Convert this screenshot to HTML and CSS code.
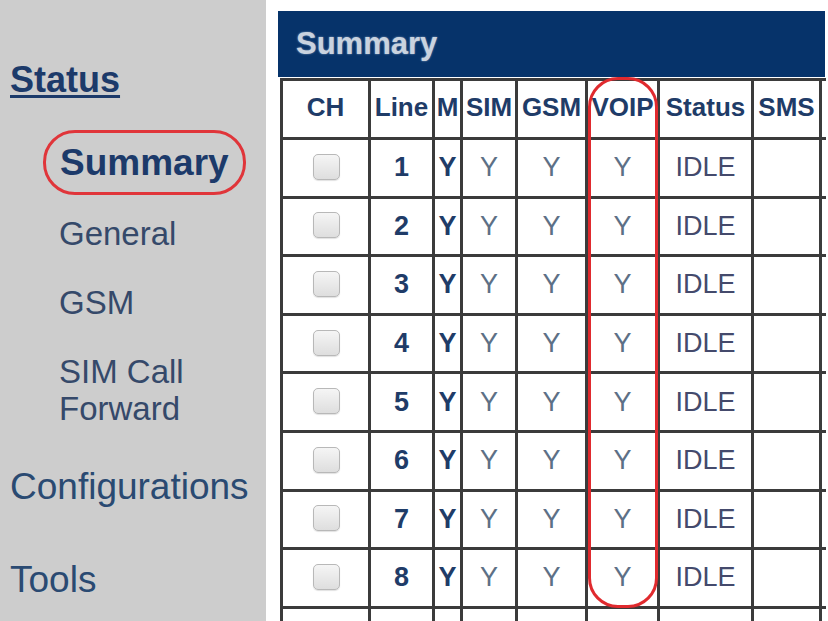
FILE: index.html
```html
<!DOCTYPE html>
<html lang="en">
<head>
<meta charset="utf-8">
<title>Summary</title>
<link rel="stylesheet" href="styles.css">
</head>
<body>
<div class="page">
  <nav class="sidebar">
    <a class="nav-top nav-status">Status</a>
    <a class="nav-sub nav-current">Summary</a>
    <a class="nav-sub nav-general">General</a>
    <a class="nav-sub">GSM</a>
    <a class="nav-sub">SIM Call<br>Forward</a>
    <a class="nav-top nav-config">Configurations</a>
    <a class="nav-top nav-tools">Tools</a>
  </nav>
  <main class="content">
    <div class="panel-title">Summary</div>
    <div class="table-wrap">
      <table class="summary">
        <colgroup>
          <col class="c-ch"><col class="c-line"><col class="c-m"><col class="c-sim"><col class="c-gsm"><col class="c-voip"><col class="c-status"><col class="c-sms"><col class="c-more">
        </colgroup>
        <thead>
          <tr><th>CH</th><th>Line</th><th>M</th><th>SIM</th><th>GSM</th><th>VOIP</th><th>Status</th><th>SMS</th><th></th></tr>
        </thead>
        <tbody>
          <tr><td><input type="checkbox" class="cb"></td><td class="num">1</td><td class="m">Y</td><td class="y">Y</td><td class="y">Y</td><td class="y">Y</td><td class="st">IDLE</td><td></td><td></td></tr>
          <tr><td><input type="checkbox" class="cb"></td><td class="num">2</td><td class="m">Y</td><td class="y">Y</td><td class="y">Y</td><td class="y">Y</td><td class="st">IDLE</td><td></td><td></td></tr>
          <tr><td><input type="checkbox" class="cb"></td><td class="num">3</td><td class="m">Y</td><td class="y">Y</td><td class="y">Y</td><td class="y">Y</td><td class="st">IDLE</td><td></td><td></td></tr>
          <tr><td><input type="checkbox" class="cb"></td><td class="num">4</td><td class="m">Y</td><td class="y">Y</td><td class="y">Y</td><td class="y">Y</td><td class="st">IDLE</td><td></td><td></td></tr>
          <tr><td><input type="checkbox" class="cb"></td><td class="num">5</td><td class="m">Y</td><td class="y">Y</td><td class="y">Y</td><td class="y">Y</td><td class="st">IDLE</td><td></td><td></td></tr>
          <tr><td><input type="checkbox" class="cb"></td><td class="num">6</td><td class="m">Y</td><td class="y">Y</td><td class="y">Y</td><td class="y">Y</td><td class="st">IDLE</td><td></td><td></td></tr>
          <tr><td><input type="checkbox" class="cb"></td><td class="num">7</td><td class="m">Y</td><td class="y">Y</td><td class="y">Y</td><td class="y">Y</td><td class="st">IDLE</td><td></td><td></td></tr>
          <tr><td><input type="checkbox" class="cb"></td><td class="num">8</td><td class="m">Y</td><td class="y">Y</td><td class="y">Y</td><td class="y">Y</td><td class="st">IDLE</td><td></td><td></td></tr>
          <tr><td></td><td></td><td></td><td></td><td></td><td></td><td></td><td></td><td></td></tr>
        </tbody>
      </table>
      <div class="voip-mark"></div>
    </div>
  </main>
</div>
</body>
</html>
```
FILE: styles.css
```css
html, body {
  margin: 0;
  padding: 0;
  background: #ffffff;
  height: 100%;
  overflow: hidden;
}
body {
  font-family: "Liberation Sans", Arial, sans-serif;
}
.page {
  display: flex;
  height: 621px;
  gap: 12px;
}
.sidebar {
  width: 266px;
  flex: none;
  background: #cdcdcd;
  display: flex;
  flex-direction: column;
  align-items: flex-start;
  padding-top: 60px;
  box-sizing: border-box;
}
.sidebar a {
  display: block;
  cursor: pointer;
}
.nav-top {
  font-size: 37px;
  line-height: 40px;
  color: #2a4a72;
  margin-left: 10px;
}
.nav-status {
  font-size: 36px;
  font-weight: bold;
  color: #1c3a6a;
  text-decoration: underline;
  text-decoration-thickness: 3px;
  text-underline-offset: 3px;
}
.nav-sub {
  font-size: 33px;
  line-height: 37px;
  color: #35496a;
  margin-left: 59px;
  margin-top: 32px;
}
.nav-current {
  font-size: 37px;
  line-height: 40px;
  font-weight: bold;
  color: #1c3a6a;
  margin-left: 43px;
  margin-top: 30px;
  padding: 10px 14px 9px 14px;
  border: 3px solid #e0353a;
  border-radius: 32px;
}
.nav-general {
  margin-top: 20px;
}
.nav-config {
  margin-top: 40px;
}
.nav-tools {
  margin-top: 53px;
}
.content {
  width: 548px;
  flex: none;
  overflow: hidden;
  padding-top: 11px;
}
.panel-title {
  height: 66px;
  width: 547px;
  background: #06336a;
  color: #c9d3df;
  font-weight: bold;
  font-size: 31px;
  line-height: 66px;
  padding-left: 18px;
  box-sizing: border-box;
  text-shadow: 0 0 2px #8ea3bf;
}
.table-wrap {
  position: relative;
  width: 620px;
}
.summary {
  border-collapse: collapse;
  table-layout: fixed;
  width: 600px;
  margin-left: 2px;
  margin-top: 1px;
}
.c-ch { width: 88px; }
.c-line { width: 64px; }
.c-m { width: 28px; }
.c-sim { width: 55px; }
.c-gsm { width: 70px; }
.c-voip { width: 72px; }
.c-status { width: 94px; }
.c-sms { width: 68px; }
.c-more { width: 61px; }
.summary th,
.summary td {
  border: 3px solid #3b3b3b;
  padding: 0;
  text-align: center;
  vertical-align: middle;
  white-space: nowrap;
  overflow: hidden;
}
.summary th {
  height: 52px;
  padding-bottom: 4px;
  font-size: 26px;
  font-weight: bold;
  color: #1f3c68;
}
.summary td {
  height: 55.6px;
  font-size: 27px;
}
.summary td.num,
.summary td.m {
  font-weight: bold;
  color: #1f3c68;
}
.summary td.y {
  color: #5d7086;
}
.summary td.st {
  color: #444a6c;
}
.cb {
  appearance: none;
  -webkit-appearance: none;
  display: inline-block;
  width: 27px;
  height: 26px;
  margin: 0 0 4px 1px;
  vertical-align: middle;
  border: 1px solid #b8b8b8;
  border-radius: 5px;
  background: linear-gradient(#f5f5f5, #dedede);
  box-shadow: 0 1px 1px rgba(0,0,0,0.12);
  box-sizing: border-box;
}
.voip-mark {
  position: absolute;
  left: 310px;
  top: -1px;
  width: 70px;
  height: 531px;
  border: 3px solid #e02a2e;
  border-radius: 30px;
  box-sizing: border-box;
  pointer-events: none;
}
```
